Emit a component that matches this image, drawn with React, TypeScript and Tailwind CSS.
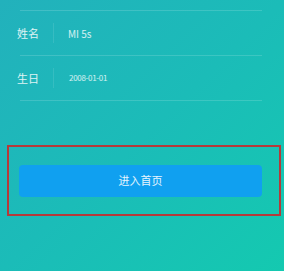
export default function App() {
  return (
    <div
      className="w-[284px] h-[271px] overflow-hidden bg-gradient-to-br from-[#22b1bc] via-[#1bbcb8] to-[#14c9b0] font-['Noto_Sans_CJK_SC','Noto_Sans',sans-serif]"
    >
      <div className="pt-[10px]">
        <div className="ml-[20px] mr-[22px] border-t border-white/15" />
        <div className="flex items-center h-[44px] pl-[17px]">
          <span className="text-[11px] text-white/85 w-[36px]">姓名</span>
          <span className="h-[20px] border-l border-white/10" />
          <span className="ml-[14px] text-[10px] text-white/80">MI 5s</span>
        </div>
        <div className="ml-[20px] mr-[22px] border-t border-white/15" />
        <div className="flex items-center h-[44px] pl-[17px]">
          <span className="text-[11px] text-white/85 w-[36px]">生日</span>
          <span className="h-[20px] border-l border-white/10" />
          <span className="ml-[15px] text-[8px] tracking-[-0.3px] text-white/80">2008-01-01</span>
        </div>
        <div className="ml-[20px] mr-[22px] border-t border-white/15" />
      </div>
      <div className="mt-[44px] ml-[7px] mr-[3px] h-[71px] border-2 border-[#b53a3a] flex items-center pl-[10px] pr-[17px]">
        <button className="w-full h-[32px] rounded-[4px] bg-[#10a0f0] text-white/90 text-[11px]">
          进入首页
        </button>
      </div>
    </div>
  );
}
